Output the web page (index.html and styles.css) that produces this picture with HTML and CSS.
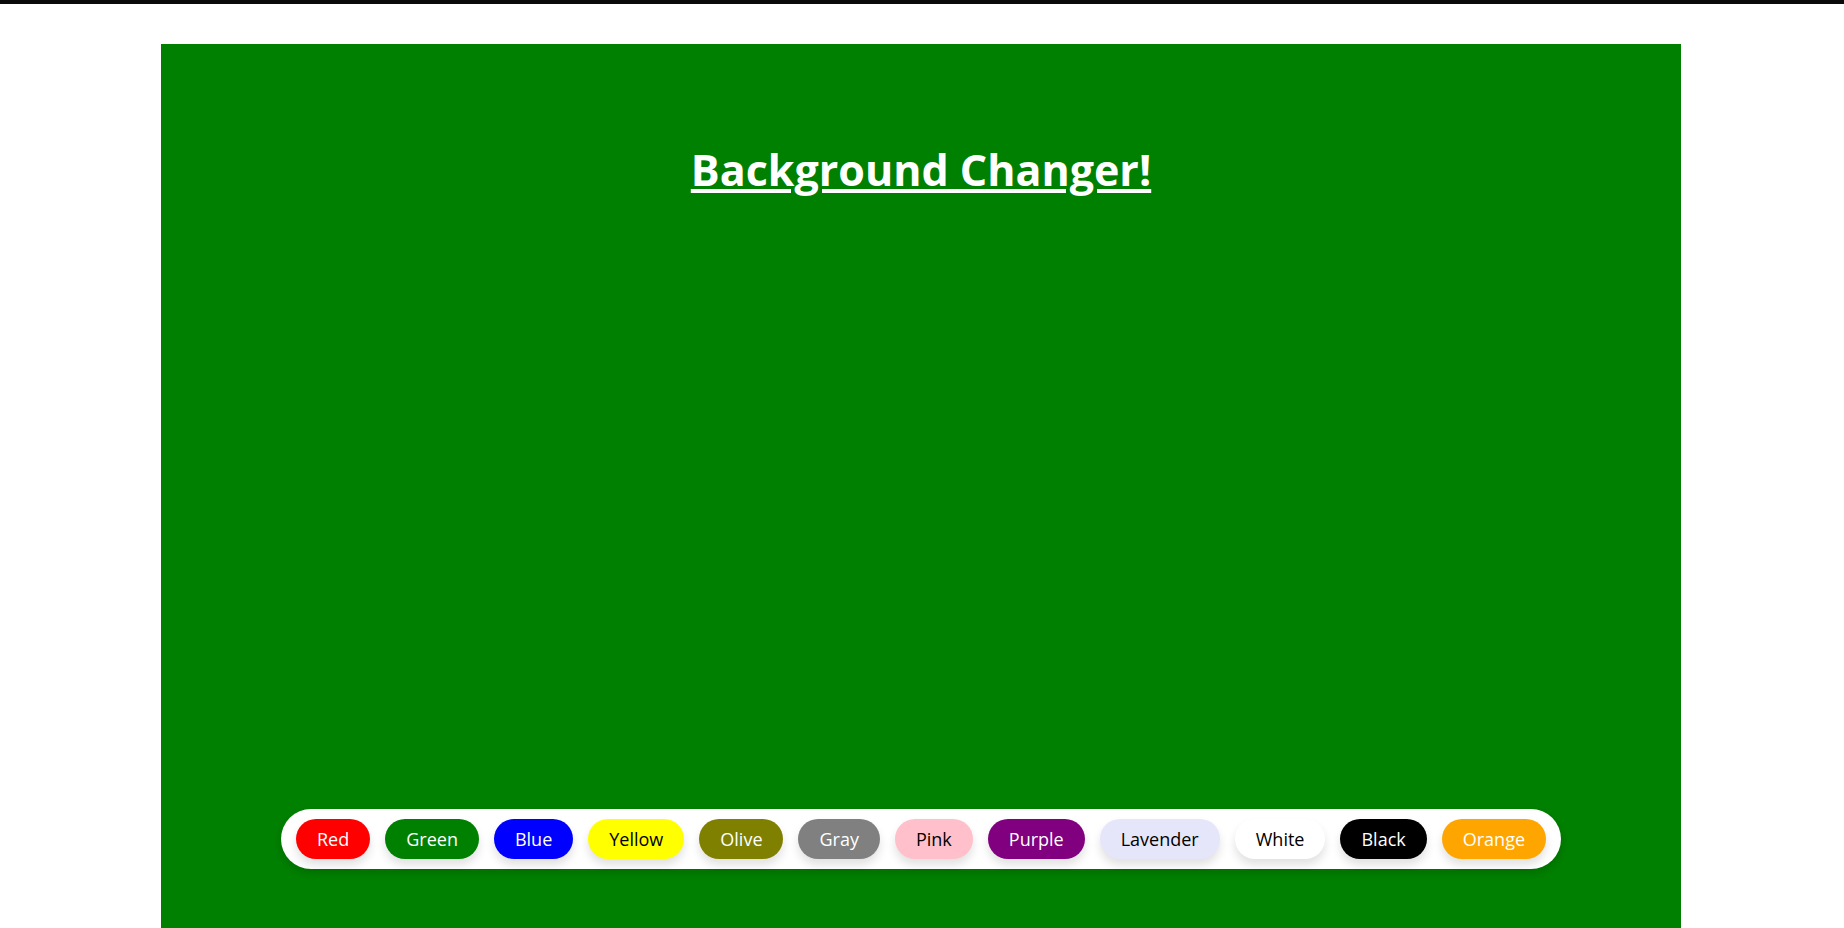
FILE: index.html
```html
<!DOCTYPE html>
<html lang="en">
<head>
<meta charset="UTF-8">
<title>Background Changer</title>
<link rel="stylesheet" href="styles.css">
</head>
<body>
<div class="topline"></div>
<div class="page">
  <main class="stage">
    <h1 class="title">Background Changer!</h1>
    <div class="bar">
      <button class="chip c-red">Red</button>
      <button class="chip c-green">Green</button>
      <button class="chip c-blue">Blue</button>
      <button class="chip c-yellow dark">Yellow</button>
      <button class="chip c-olive">Olive</button>
      <button class="chip c-gray">Gray</button>
      <button class="chip c-pink dark">Pink</button>
      <button class="chip c-purple">Purple</button>
      <button class="chip c-lavender dark">Lavender</button>
      <button class="chip c-white dark">White</button>
      <button class="chip c-black">Black</button>
      <button class="chip c-orange">Orange</button>
    </div>
  </main>
</div>
</body>
</html>
```
FILE: styles.css
```css
* { box-sizing: border-box; }
html, body { margin: 0; padding: 0; height: 100%; overflow: hidden; background: #fff; }
body { font-family: "Open Sans", "Noto Sans", sans-serif; }
.topline { height: 4px; background: #0a0a0a; }
.page { padding: 40px 163px 0 161px; height: calc(100% - 4px); }
.stage {
  background: #008000;
  height: 100%;
  display: flex;
  flex-direction: column;
  align-items: center;
}
.title {
  margin: 97px 0 0;
  color: #fff;
  font-size: 43px;
  font-weight: 700;
  line-height: 58px;
  text-decoration: underline;
  text-decoration-thickness: 4px;
  text-underline-offset: 3px;
}
.bar {
  margin-top: auto;
  margin-bottom: 59px;
  background: #fff;
  height: 60px;
  border-radius: 30px;
  padding: 10px 15px;
  display: flex;
  gap: 15px;
  box-shadow: 0 4px 10px rgba(0,0,0,0.15);
}
.chip {
  height: 40px;
  border: none;
  border-radius: 20px;
  padding: 0 21px;
  font-family: "Open Sans", "Noto Sans", sans-serif;
  font-size: 18px;
  color: #fff;
  box-shadow: 0 6px 10px rgba(0,0,0,0.12);
}
.chip.dark { color: #000; }
.c-red { background: #ff0000; }
.c-green { background: #008000; }
.c-blue { background: #0000ff; }
.c-yellow { background: #ffff00; }
.c-olive { background: #808000; }
.c-gray { background: #808080; }
.c-pink { background: #ffc0cb; }
.c-purple { background: #800080; }
.c-lavender { background: #e6e6fa; }
.c-white { background: #ffffff; }
.c-black { background: #000000; }
.c-orange { background: #ffa500; }
```
